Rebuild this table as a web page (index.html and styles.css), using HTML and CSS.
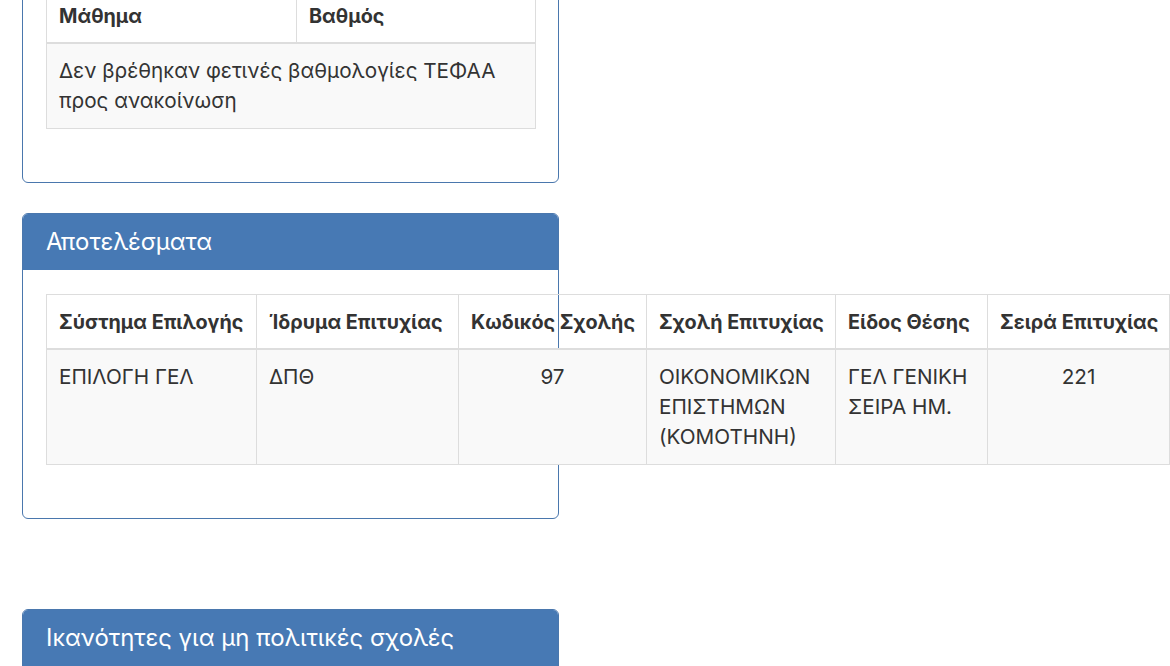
FILE: index.html
```html
<!DOCTYPE html>
<html lang="el">
<head>
<meta charset="utf-8">
<title>Αποτελέσματα</title>
<link rel="stylesheet" href="styles.css">
</head>
<body>
<div class="container">
  <div class="panel panel-first">
    <div class="panel-body">
      <table class="table table-small">
        <colgroup>
          <col class="c-subject">
          <col class="c-grade">
        </colgroup>
        <thead>
          <tr><th>Μάθημα</th><th>Βαθμός</th></tr>
        </thead>
        <tbody>
          <tr><td colspan="2">Δεν βρέθηκαν φετινές βαθμολογίες ΤΕΦΑΑ προς ανακοίνωση</td></tr>
        </tbody>
      </table>
    </div>
  </div>

  <div class="panel">
    <div class="panel-heading"><h3 class="panel-title">Αποτελέσματα</h3></div>
    <div class="panel-body">
      <table class="table table-wide">
        <colgroup>
          <col class="c1"><col class="c2"><col class="c3"><col class="c4"><col class="c5"><col class="c6">
        </colgroup>
        <thead>
          <tr>
            <th>Σύστημα Επιλογής</th>
            <th>Ίδρυμα Επιτυχίας</th>
            <th>Κωδικός Σχολής</th>
            <th>Σχολή Επιτυχίας</th>
            <th>Είδος Θέσης</th>
            <th>Σειρά Επιτυχίας</th>
          </tr>
        </thead>
        <tbody>
          <tr>
            <td>ΕΠΙΛΟΓΗ ΓΕΛ</td>
            <td>ΔΠΘ</td>
            <td class="center">97</td>
            <td>ΟΙΚΟΝΟΜΙΚΩΝ ΕΠΙΣΤΗΜΩΝ (ΚΟΜΟΤΗΝΗ)</td>
            <td>ΓΕΛ ΓΕΝΙΚΗ ΣΕΙΡΑ ΗΜ.</td>
            <td class="center">221</td>
          </tr>
        </tbody>
      </table>
    </div>
  </div>

  <div class="spacer"></div>

  <div class="panel">
    <div class="panel-heading"><h3 class="panel-title">Ικανότητες για μη πολιτικές σχολές</h3></div>
    <div class="panel-body"></div>
  </div>
</div>
</body>
</html>
```

FILE: styles.css
```css
html, body {
  margin: 0;
  padding: 0;
  background: #fff;
}
body {
  font-family: Inter, "Liberation Sans", Arial, sans-serif;
  font-size: 20.7px;
  line-height: 30px;
  color: #333;
  overflow: hidden;
}
.container {
  padding-left: 22px;
}
.panel {
  width: 537px;
  box-sizing: border-box;
  border: 1px solid #4a77ad;
  border-radius: 6px;
  background: #fff;
  margin-bottom: 30px;
}
.panel-first {
  margin-top: -37px;
  margin-bottom: 30px;
}
.panel-heading {
  background: #4779b4;
  color: #fff;
  padding: 15px 23px;
  border-top-left-radius: 5px;
  border-top-right-radius: 5px;
}
.panel-title {
  margin: 0;
  font-size: 23.9px;
  font-weight: 400;
  line-height: 26px;
}
.panel-body {
  padding: 24px 23px;
}
.table {
  border-collapse: collapse;
  border-spacing: 0;
  table-layout: fixed;
  margin-bottom: 29px;
  border: 1px solid #ddd;
}
.table th,
.table td {
  border: 1px solid #ddd;
  padding: 12px;
  text-align: left;
  vertical-align: top;
}
.table th {
  font-size: 19.8px;
  font-weight: 700;
  padding: 11.5px 12px;
  border-bottom: 2px solid #ddd;
  white-space: nowrap;
}
.table tbody tr:nth-child(odd) td {
  background: #f9f9f9;
}
.table .center {
  text-align: center;
}
.table-small {
  width: 489px;
}
.c-subject { width: 250px; }
.c-grade { width: 239px; }
.table-wide {
  width: 1123px;
}
.c1 { width: 210px; }
.c2 { width: 202px; }
.c3 { width: 188px; }
.c4 { width: 189px; }
.c5 { width: 152px; }
.c6 { width: 182px; }
.spacer {
  height: 60px;
}
```
